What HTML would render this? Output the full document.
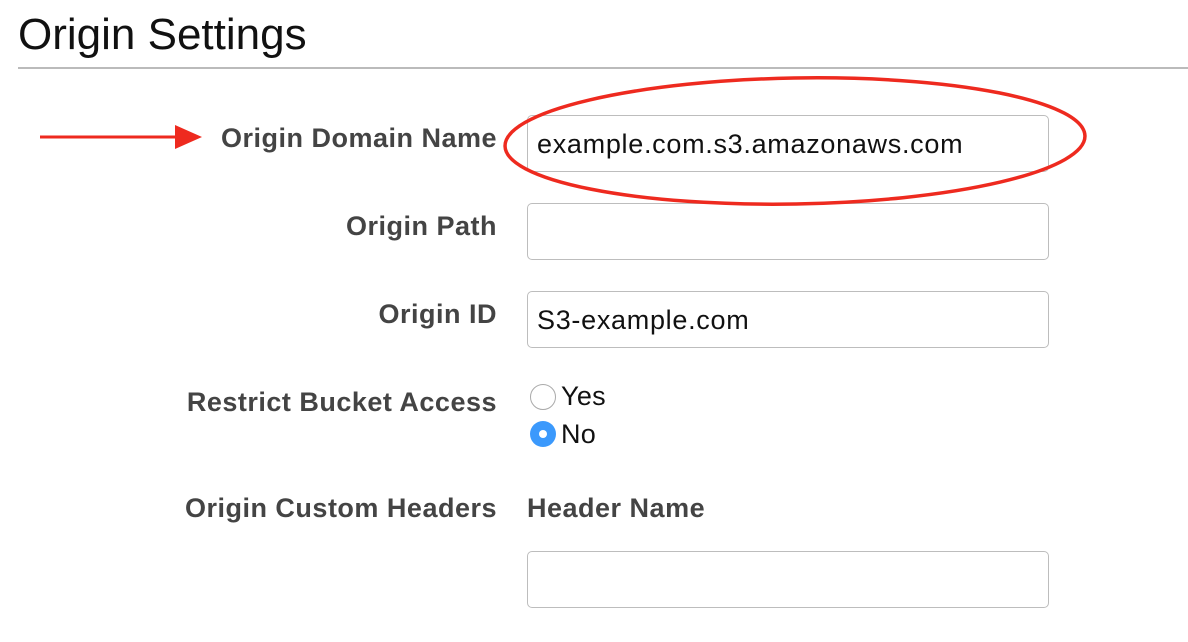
<!DOCTYPE html>
<html><head><style>
body{margin:0;width:1188px;height:642px;background:#fff;position:relative;overflow:hidden;font-family:"Liberation Sans",Arial,sans-serif}
.t{position:absolute;left:18px;top:10px;font-size:44px;color:#111}
.hr{position:absolute;left:18px;top:67px;width:1170px;height:2px;background:#bbb}
.l{position:absolute;right:691px;font-size:27px;font-weight:bold;color:#444;white-space:nowrap;letter-spacing:0.5px}
.in{position:absolute;left:527px;width:522px;height:57px;border:1px solid #bdbdbd;border-radius:5px;box-sizing:border-box;font-size:27px;color:#111;padding-left:9px;line-height:57px;letter-spacing:0.7px}
.r{position:absolute;font-size:27px;color:#111;letter-spacing:0.3px}
</style></head><body>
<div class="t">Origin Settings</div>
<div class="hr"></div>
<div class="l" style="top:123px">Origin Domain Name</div>
<div class="l" style="top:211px">Origin Path</div>
<div class="l" style="top:299px">Origin ID</div>
<div class="l" style="top:387px">Restrict Bucket Access</div>
<div class="l" style="top:493px">Origin Custom Headers</div>
<div class="l" style="top:493px;left:527px;right:auto">Header Name</div>
<div class="in" style="top:115px">example.com.s3.amazonaws.com</div>
<div class="in" style="top:203px"></div>
<div class="in" style="top:291px">S3-example.com</div>
<div class="in" style="top:551px"></div>
<div style="position:absolute;left:530px;top:384px;width:24px;height:24px;border:1px solid #aaa;border-radius:50%;background:#fff"></div>
<div class="r" style="left:561px;top:381px">Yes</div>
<div style="position:absolute;left:530px;top:421px;width:26px;height:26px;border-radius:50%;background:#3b99fc"></div>
<div style="position:absolute;left:539px;top:430px;width:8px;height:8px;border-radius:50%;background:#fff"></div>
<div class="r" style="left:561px;top:419px">No</div>
<svg style="position:absolute;left:0;top:0" width="1188" height="642">
<ellipse cx="795" cy="141" rx="290" ry="63" fill="none" stroke="#ee2a1f" stroke-width="3.5" transform="rotate(-1 795 141)"/>
<line x1="40" y1="137" x2="180" y2="137" stroke="#ee2a1f" stroke-width="3"/>
<polygon points="175,125 202,137 175,149" fill="#ee2a1f"/>
</svg>
</body></html>
